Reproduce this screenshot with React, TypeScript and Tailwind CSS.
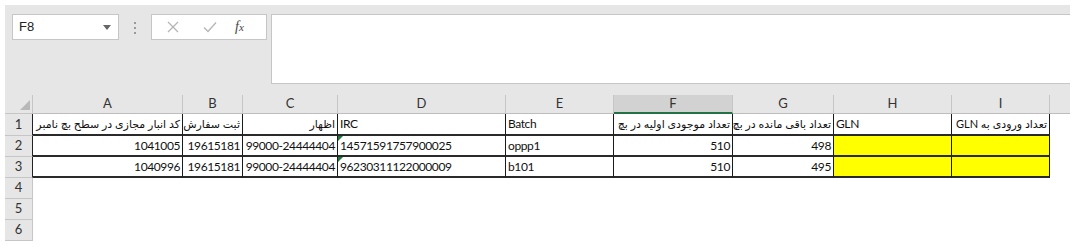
import React from "react";

const cols = ["A", "B", "C", "D", "E", "F", "G", "H", "I"];
const widths = [150, 60, 95, 168, 108, 119, 101, 118, 98];

type Cell = { t?: string; align?: "l" | "r"; rtl?: boolean; yellow?: boolean; tri?: boolean };

const rows: Cell[][] = [
  [
    { t: "کد انبار مجازی در سطح بچ نامبر", align: "r", rtl: true },
    { t: "ثبت سفارش", align: "r", rtl: true },
    { t: "اظهار", align: "r", rtl: true },
    { t: "IRC", align: "l" },
    { t: "Batch", align: "l" },
    { t: "تعداد موجودی اولیه در بچ", align: "r", rtl: true },
    { t: "تعداد باقی مانده در بچ", align: "r", rtl: true },
    { t: "GLN", align: "l" },
    { t: "تعداد ورودی به GLN", align: "r", rtl: true },
  ],
  [
    { t: "1041005", align: "r" },
    { t: "19615181", align: "r" },
    { t: "99000-24444404", align: "r" },
    { t: "14571591757900025", align: "l", tri: true },
    { t: "oppp1", align: "l" },
    { t: "510", align: "r" },
    { t: "498", align: "r" },
    { yellow: true },
    { yellow: true },
  ],
  [
    { t: "1040996", align: "r" },
    { t: "19615181", align: "r" },
    { t: "99000-24444404", align: "r" },
    { t: "96230311122000009", align: "l", tri: true },
    { t: "b101", align: "l" },
    { t: "510", align: "r" },
    { t: "495", align: "r" },
    { yellow: true },
    { yellow: true },
  ],
];

const rowHeights = [22, 21, 21, 21, 21, 21];

export default function App() {
  return (
    <div
      className="w-[1080px] h-[252px] bg-white overflow-hidden"
      style={{ fontFamily: 'Lato, "DejaVu Sans", sans-serif' }}
    >
      <div className="ml-[5px] mt-[5px] w-[1065px] h-[236px] bg-[#e6e6e6] flex flex-col">
        {/* formula bar */}
        <div className="h-[90px] flex items-start pt-[9px]">
          <div className="ml-[7px] w-[107px] h-[26px] bg-white border border-[#c6c6c6] flex items-center justify-between pl-[6px] pr-[7px]">
            <span className="text-[13px] text-[#222]" style={{ fontFamily: '"Liberation Sans", sans-serif' }}>F8</span>
            <span className="w-0 h-0 border-l-[4px] border-r-[4px] border-t-[5px] border-l-transparent border-r-transparent border-t-[#666]" />
          </div>
          <div className="ml-[15px] mt-[8px] flex flex-col gap-[3px]">
            <span className="w-[2px] h-[2px] bg-[#9a9a9a]" />
            <span className="w-[2px] h-[2px] bg-[#9a9a9a]" />
            <span className="w-[2px] h-[2px] bg-[#9a9a9a]" />
          </div>
          <div className="ml-[15px] w-[116px] h-[26px] bg-white border border-[#c6c6c6] flex items-center">
            <svg width="14" height="14" viewBox="0 0 14 14" className="ml-[14px]">
              <path d="M2 2 L12 12 M12 2 L2 12" stroke="#b5b5b5" strokeWidth="1.3" fill="none" />
            </svg>
            <svg width="16" height="14" viewBox="0 0 16 14" className="ml-[22px]">
              <path d="M2 7.5 L6 11.5 L14 2.5" stroke="#b5b5b5" strokeWidth="1.3" fill="none" />
            </svg>
            <span
              className="ml-[17px] text-[14px] italic text-[#444] leading-none"
              style={{ fontFamily: '"Liberation Serif", serif' }}
            >
              f<span className="text-[11px]">x</span>
            </span>
          </div>
          <div className="ml-[4px] flex-1 h-[70px] bg-white border-l border-t border-b border-[#c6c6c6]" />
        </div>

        {/* grid */}
        <div className="flex flex-col bg-white">
          {/* header row */}
          <div className="flex h-[19px] bg-[#e6e6e6]">
            <div className="w-[28px] h-full border-r border-b border-[#c6c6c6] flex items-end justify-end pr-[2px] pb-[3px]">
              <svg width="10" height="10" viewBox="0 0 10 10">
                <path d="M10 0 L10 10 L0 10 Z" fill="#b8b8b8" />
              </svg>
            </div>
            {cols.map((c, i) => (
              <div
                key={c}
                style={{ width: widths[i] }}
                className={
                  "h-full flex items-center justify-center text-[13px] text-[#333] border-r " +
                  (c === "F"
                    ? "bg-[#d2d2d2] border-[#c6c6c6] border-b-2 border-b-[#217346]"
                    : "border-[#c6c6c6] border-b border-b-[#bdbdbd]")
                }
              >
                {c}
              </div>
            ))}
            <div className="flex-1 h-full border-b border-[#bdbdbd]" />
          </div>

          {rowHeights.map((h, r) => (
            <div key={r} className="flex bg-white" style={{ height: h }}>
              <div
                className={
                  "w-[28px] h-full bg-[#e6e6e6] flex items-center justify-center text-[13px] text-[#333] border-b border-[#c6c6c6] border-r " +
                  (r < 3 ? "border-r-[#222]" : "border-r-[#c6c6c6]")
                }
              >
                {r + 1}
              </div>
              {r < 3 ? (
                rows[r].map((cell, i) => (
                  <div
                    key={i}
                    style={{ width: widths[i] }}
                    className={
                      "h-full relative overflow-hidden border-r border-r-[#1a1a1a] border-b-2 border-b-[#2a2a2a] flex items-center px-[2px] whitespace-nowrap " +
                      (cell.yellow ? "bg-[#ffff00] " : "bg-white ") +
                      (cell.align === "r" ? "justify-end " : "justify-start ")
                    }
                  >
                    {cell.tri && (
                      <span className="absolute left-0 top-0 w-0 h-0 border-t-[5px] border-t-[#1e7a3c] border-r-[5px] border-r-transparent" />
                    )}
                    {cell.t && (
                      <span
                        dir={cell.rtl ? "rtl" : undefined}
                        className={
                          "text-[#111] shrink-0 " +
                          (cell.rtl ? "text-[11px]" : "text-[12px] tracking-[-0.4px]")
                        }
                      >
                        {cell.t}
                      </span>
                    )}
                  </div>
                ))
              ) : (
                <div className="flex-1 h-full bg-white" />
              )}
              {r < 3 && <div className="flex-1 h-full bg-white" />}
            </div>
          ))}
        </div>
      </div>
    </div>
  );
}
